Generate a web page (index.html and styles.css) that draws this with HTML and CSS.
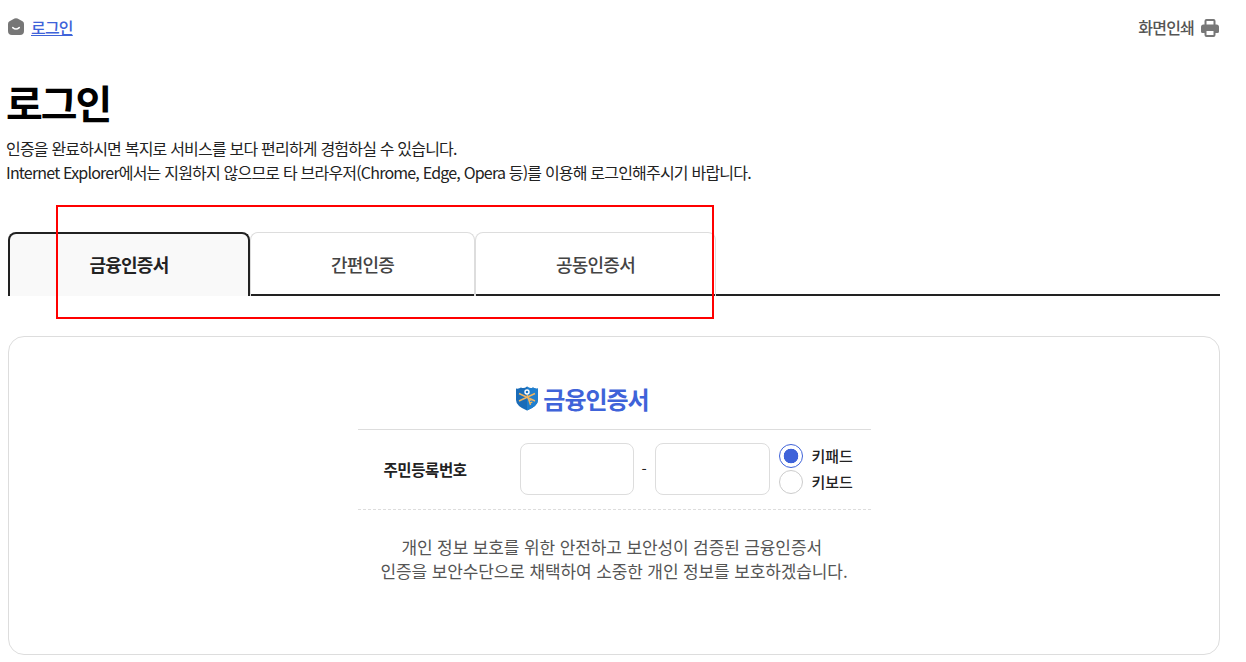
FILE: index.html
```html
<!DOCTYPE html>
<html lang="ko">
<head>
    <meta charset="utf-8">
    <title>로그인</title>
    <link rel="stylesheet" href="styles.css">
</head>
<body>
    <div class="top-bar">
        <div class="crumb">
            <svg class="home-icon" width="16" height="17" viewBox="0 0 16 17">
                <path d="M6.500 .6Q8 -.2 9.500 .6L14.500 3.200Q16 4 16 6V13Q16 17 12 17H4Q0 17 0 13V6Q0 4 1.500 3.200Z" fill="#777"/>
                <path d="M4.800 9.600Q8 12.400 11.200 9.600" fill="none" stroke="#fff" stroke-width="1.600" stroke-linecap="round"/>
            </svg>
            <a href="#" class="crumb-link">로그인</a>
        </div>
        <div class="print">
            <span>화면인쇄</span>
            <svg class="print-icon" width="18" height="18" viewBox="0 0 18 18">
                <path d="M4.500 6V2Q4.500 1 5.500 1H12.500Q13.500 1 13.500 2V6" fill="#fff" stroke="#777" stroke-width="2"/>
                <path d="M2.500 5.500H15.500A2.500 2.500 0 0 1 18 8V12.500Q18 14 16.500 14H1.500Q0 14 0 12.500V8A2.500 2.500 0 0 1 2.500 5.500Z" fill="#777"/>
                <path d="M4.500 11H13.500V16Q13.500 17 12.500 17H5.500Q4.500 17 4.500 16Z" fill="#fff" stroke="#777" stroke-width="2"/>
            </svg>
        </div>
    </div>

    <h1 class="page-title">로그인</h1>
    <p class="intro">인증을 완료하시면 복지로 서비스를 보다 편리하게 경험하실 수 있습니다.<br>Internet Explorer에서는 지원하지 않으므로 타 브라우저(Chrome, Edge, Opera 등)를 이용해 로그인해주시기 바랍니다.</p>

    <div class="tabs">
        <div class="tab tab-first active">금융인증서</div>
        <div class="tab tab-second">간편인증</div>
        <div class="tab tab-third">공동인증서</div>
        <div class="highlight-box"></div>
    </div>

    <div class="panel">
        <div class="panel-title">
            <svg width="24" height="25" viewBox="0 0 24 25">
                <path d="M1 2.500Q4 3 6 1.500Q9 3 12 .5Q15 3 18 1.500Q20 3 23 2.500V14Q23 20 12 24.500Q1 20 1 14Z" fill="#1a6cb8"/>
                <path d="M12 .5Q15 3 18 1.500Q20 3 23 2.500V14Q23 20 12 24.500Z" fill="#1f7fcf"/>
                <path d="M4 7.500 20 15M20 7.500 4 15" stroke="#f0b55f" stroke-width="1.400" fill="none"/>
                <path d="M12 8.500 15.500 19M14 14.500 16.500 13.700M14.800 17 17.300 16.200" stroke="#f0b55f" stroke-width="1.400" fill="none"/>
                <circle cx="12" cy="6" r="2" fill="none" stroke="#fff" stroke-width="1.400"/>
            </svg>
            <span>금융인증서</span>
        </div>
        <div class="form-row">
            <div class="form-label">주민등록번호</div>
            <input class="text-box text-box-first" type="text">
            <span class="dash">-</span>
            <input class="text-box" type="text">
            <div class="radios">
                <div class="radio-item"><span class="radio checked"></span><span>키패드</span></div>
                <div class="radio-item"><span class="radio"></span><span>키보드</span></div>
            </div>
        </div>
        <p class="notice">개인 정보 보호를 위한 안전하고 보안성이 검증된 금융인증서&nbsp;<br>인증을 보안수단으로 채택하여 소중한 개인 정보를 보호하겠습니다.</p>
    </div>
</body>
</html>
```

FILE: styles.css
```css
* {
    box-sizing: border-box;
}

body {
    margin: 0;
    padding: 0 26px 0 6px;
    font-family: "Noto Sans CJK KR", "Noto Sans", sans-serif;
    color: #111;
    background: #fff;
    overflow: hidden;
}

.top-bar {
    display: flex;
    justify-content: space-between;
    align-items: center;
    height: 55px;
    padding: 0 1px 2px 2px;
}
.crumb {
    display: flex;
    align-items: center;
    gap: 7px;
}
.crumb-link {
    font-size: 16px;
    font-weight: 500;
    letter-spacing: -0.8px;
    color: #3f63d9;
}
.print {
    display: flex;
    align-items: center;
    gap: 7px;
    font-size: 16px;
    font-weight: 500;
    letter-spacing: -0.8px;
    color: #555;
}
.print-icon {
    margin-top: 2px;
}

.page-title {
    margin: 17px 0 0;
    font-size: 40px;
    line-height: 60px;
    font-weight: 700;
    letter-spacing: -2px;
    color: #000;
}
.intro {
    margin: 4px 0 0;
    font-size: 16px;
    line-height: 24px;
    letter-spacing: -0.8px;
    color: #222;
}

.tabs {
    position: relative;
    display: flex;
    height: 64px;
    margin: 48px 0 0 2px;
    border-bottom: 2px solid #222;
}
.tab {
    display: flex;
    align-items: center;
    justify-content: center;
    height: 64px;
    padding-bottom: 2px;
    font-size: 18px;
    font-weight: 500;
    letter-spacing: -0.8px;
    color: #444;
    border: 1px solid #ddd;
    border-bottom: 0;
    border-radius: 8px 8px 0 0;
}
.tab-first {
    width: 242px;
}
.tab-second {
    width: 225px;
}
.tab-third {
    width: 241px;
}
.tab.active {
    font-weight: 700;
    color: #222;
    background: #f9f9f9;
    border: 2px solid #222;
    border-bottom: 0;
}
.highlight-box {
    position: absolute;
    left: 48px;
    top: -27px;
    width: 658px;
    height: 114px;
    border: 2px solid #f00;
}

.panel {
    display: flex;
    flex-direction: column;
    align-items: center;
    height: 319px;
    margin: 40px 0 0 2px;
    padding-top: 44px;
    border: 1px solid #ddd;
    border-radius: 16px;
}
.panel-title {
    display: flex;
    align-items: center;
    justify-content: center;
    gap: 4px;
    width: 513px;
    height: 49px;
    padding: 0 64px 14px 0;
    font-size: 24px;
    font-weight: 700;
    letter-spacing: -1px;
    color: #3f63d9;
    border-bottom: 1px solid #ddd;
}

.form-row {
    display: flex;
    align-items: center;
    width: 513px;
    height: 80px;
    padding-bottom: 2px;
    border-bottom: 1px dashed #ddd;
}
.form-label {
    width: 162px;
    padding-left: 26px;
    font-size: 15.500px;
    font-weight: 700;
    letter-spacing: -0.400px;
    color: #222;
}
.text-box {
    width: 115px;
    height: 52px;
    background: #fff;
    border: 1px solid #ddd;
    border-radius: 8px;
}
.text-box-first {
    width: 114px;
}
.dash {
    width: 21px;
    text-align: center;
    font-size: 15px;
    color: #222;
}
.radios {
    display: flex;
    flex-direction: column;
    gap: 2px;
    margin-left: 9px;
}
.radio-item {
    display: flex;
    align-items: center;
    gap: 9px;
    height: 24px;
    font-size: 15px;
    font-weight: 500;
    letter-spacing: -0.100px;
    color: #222;
}
.radio {
    width: 24px;
    height: 24px;
    background: #fff;
    border: 1px solid #ccc;
    border-radius: 50%;
}
.radio.checked {
    border-color: #3f63d9;
    background: radial-gradient(circle, #3f63d9 0 7px, #fff 7.600px);
}

.notice {
    margin: 25px 0 0;
    text-align: center;
    font-size: 17px;
    line-height: 24px;
    letter-spacing: -0.120px;
    color: #555;
}
```
